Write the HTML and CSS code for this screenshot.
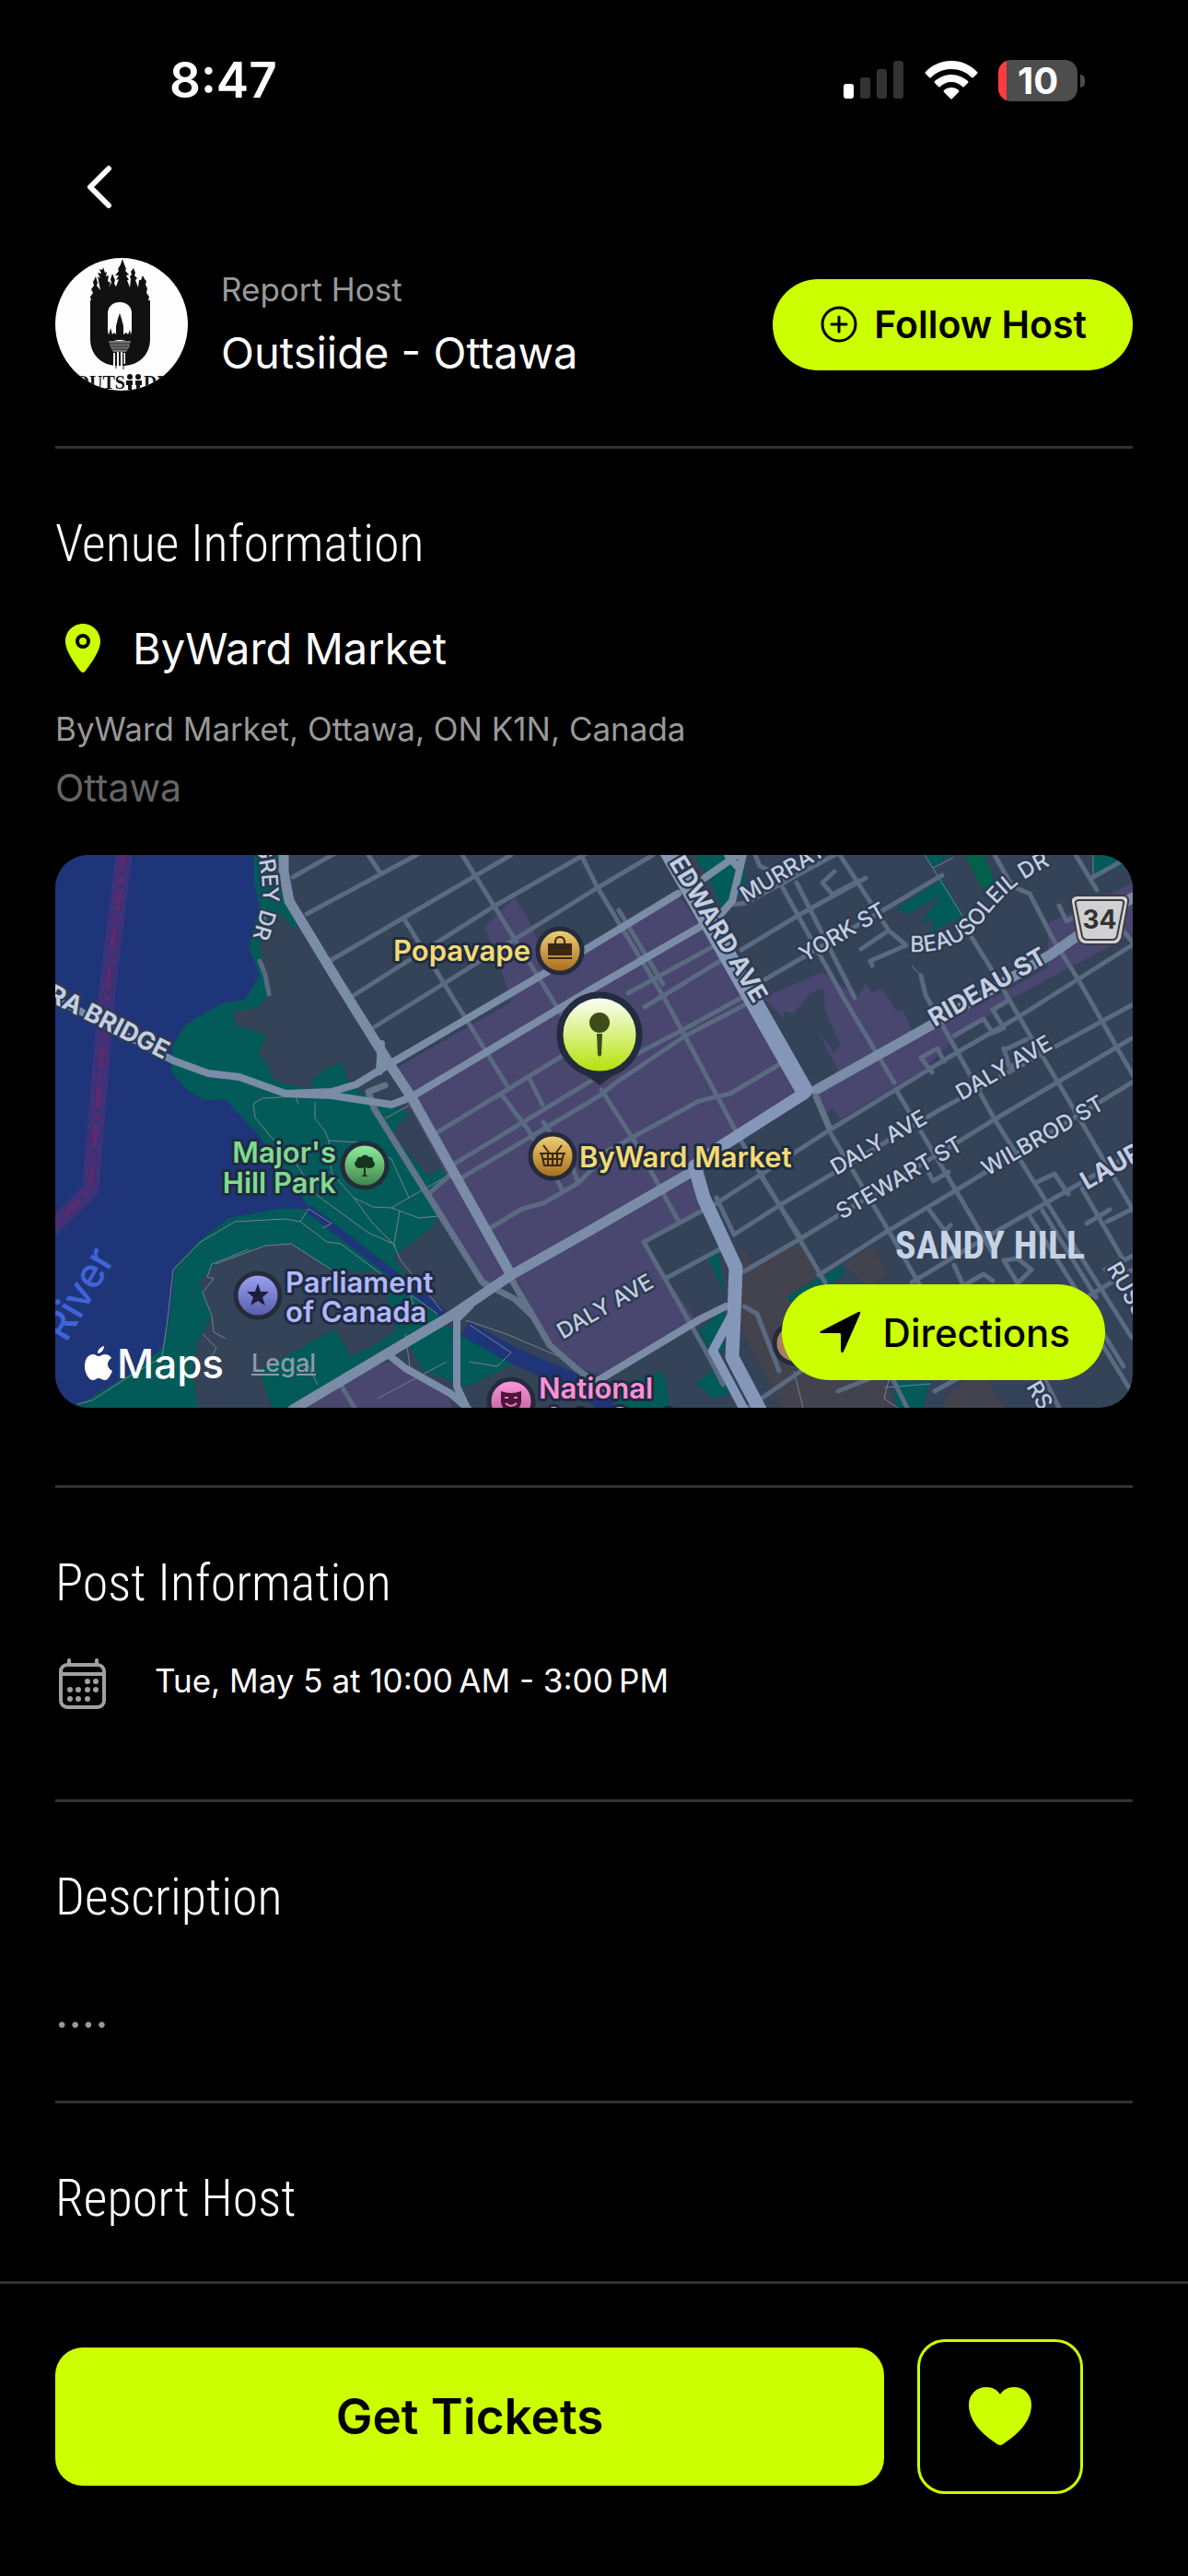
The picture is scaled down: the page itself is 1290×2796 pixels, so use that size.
FILE: index.html
```html
<!DOCTYPE html>
<html lang="en">
<head>
    <meta charset="UTF-8">
    <meta name="viewport" content="width=device-width, initial-scale=1.0">
    <title>Outsiide - Ottawa</title>
    <link rel="stylesheet" href="styles.css">
</head>
<body>
    <div class="statusbar">
        <span class="time">8:47</span>
        <div class="indicators">
            <svg class="signal" width="66" height="42" viewBox="0 0 66 42">
                <rect x="0" y="25" width="11" height="16" rx="3" fill="#fff"/>
                <rect x="18" y="18" width="11" height="23" rx="3" fill="#333"/>
                <rect x="36" y="9" width="11" height="32" rx="3" fill="#333"/>
                <rect x="54" y="0" width="11" height="41" rx="3" fill="#333"/>
            </svg>
            <svg class="wifi" width="58" height="42" viewBox="0 0 58 42" fill="#fff">
                <path d="M29 0C40 0 50 4.500 57 12Q58 13 57 14L53 18Q52 19 51 18C45 12 37 9 29 9S13 12 7 18Q6 19 5 18L1 14Q0 13 1 12C8 4.500 18 0 29 0Z"/>
                <path d="M29 15C36 15 42 18 47 22Q48 23 47 24L43 28Q42 29 41 28C38 25 34 23 29 23S20 25 17 28Q16 29 15 28L11 24Q10 23 11 22C16 18 22 15 29 15Z"/>
                <path d="M29 29C32 29 35 30 37 32Q38 33 37 34L30 41Q29 42 28 41L21 34Q20 33 21 32C23 30 26 29 29 29Z"/>
            </svg>
            <div class="battery">10</div>
        </div>
    </div>

    <div class="topbar">
        <button class="back" aria-label="Back">
            <svg width="48" height="48" viewBox="0 0 48 48"><path d="M34 4L14 24L34 44" fill="none" stroke="#fff" stroke-width="6" stroke-linecap="round" stroke-linejoin="round"/></svg>
        </button>
    </div>

    <main class="content">
        <div class="host">
            <svg class="avatar" viewBox="0 0 144 144">
                <rect width="144" height="144" fill="#fdfdfd"/>
                <!-- trees -->
                <path fill="#111" d="M38 55L39 46L38 42L41 38L39 34L42 30L41 26L44 20L46 27L45 30L49 35L46 20L49 22L46 16L50 17L48 12L51 13L52 10L54 16L56 15L55 20L58 19L57 25L60 27L58 32L61 27L60 23L62 17L65 24L64 28L66 31L69 23L66 24L69 19L65 19L69 14L68 12L71 7L73 1L75 7L77 12L76 14L80 18L77 19L80 24L78 24L81 32L82 23L81 20L83 18L82 15L85 11L87 16L86 19L89 22L87 24L90 32L91 24L93 24L95 19L97 23L99 25L98 29L100 33L99 38L102 42L101 46L103 53L103 70L38 70Z"/>
                <rect x="38" y="42" width="65" height="75" rx="28" fill="#111"/>
                <rect x="38" y="46" width="65" height="30" fill="#111"/>
                <rect x="57" y="48" width="26" height="42" rx="12" fill="#fdfdfd"/>
                <!-- parliament skyline -->
                <path fill="#111" d="M58 89V84L60 76L62 83L64 81L66 83V74L68 66L70 60L72 66L74 74V83L77 81L79 83L81 78L82 84V89Z"/>
                <path fill="#777" d="M58 90H82L80 97L77 102H63L60 97Z"/>
                <path stroke="#222" stroke-width="1" d="M59 93H81M60 96H79M62 99H78"/>
                <path stroke="#fff" stroke-width="2" d="M64 103V117M68 102V122M72 102V119M75 103V115"/>
                <path stroke="#222" stroke-width="1" d="M66 104V120M70 104V116M74 104V121"/>
                <text class="avatar-text end" x="76" y="142">OUTS</text>
                <g fill="#111">
                    <circle cx="81" cy="129" r="3"/><path d="M77 133H84V138H83V143H79V138H77Z"/>
                    <circle cx="90" cy="129" r="3"/><path d="M87 133H94V138H92V143H88V138H87Z"/>
                </g>
                <text class="avatar-text" x="96" y="142">DE</text>
            </svg>
            <div class="host-info">
                <span class="host-label">Report Host</span>
                <span class="host-name">Outsiide - Ottawa</span>
            </div>
            <button class="follow">
                <svg width="40" height="40" viewBox="0 0 40 40" fill="none" stroke="#000" stroke-width="3" stroke-linecap="round"><circle cx="20" cy="20" r="18"/><path d="M20 12V28M12 20H28"/></svg>
                Follow Host
            </button>
        </div>

        <section class="section">
            <h2>Venue Information</h2>
            <div class="venue">
                <svg width="60" height="60" viewBox="0 0 60 60">
                    <path fill="#cf0" d="M30 3C19 3 11 12 11 22C11 33 22 47 27 54Q30 58 33 54C38 47 49 33 49 22C49 12 41 3 30 3Z"/>
                    <circle cx="30" cy="22" r="6" fill="#cf0" stroke="#000" stroke-width="4"/>
                </svg>
                <span>ByWard Market</span>
            </div>
            <p class="address">ByWard Market, Ottawa, ON K1N, Canada</p>
            <p class="city">Ottawa</p>

            <div class="map">
                <svg class="map-canvas" viewBox="0 0 1170 600" preserveAspectRatio="xMidYMid slice">
                    <defs>
                        <linearGradient id="gold" x1="0" y1="0" x2="0" y2="1"><stop offset="0" stop-color="#f0d377"/><stop offset="1" stop-color="#a8691b"/></linearGradient>
                        <linearGradient id="green" x1="0" y1="0" x2="0" y2="1"><stop offset="0" stop-color="#93f3a0"/><stop offset="1" stop-color="#3b7f46"/></linearGradient>
                        <linearGradient id="violet" x1="0" y1="0" x2="0" y2="1"><stop offset="0" stop-color="#9ea2f5"/><stop offset="1" stop-color="#555ba6"/></linearGradient>
                        <linearGradient id="pink" x1="0" y1="0" x2="0" y2="1"><stop offset="0" stop-color="#ff9ae0"/><stop offset="1" stop-color="#b5508f"/></linearGradient>
                        <linearGradient id="lime" x1="0" y1="0" x2="0" y2="1"><stop offset="0" stop-color="#fff"/><stop offset="1" stop-color="#b2e000"/></linearGradient>
                        <path id="grey-dr" d="M218 -12L224 22L226 50L211 102"/>
                        <path id="beausoleil" d="M928 105C970 108 996 88 1012 66C1034 38 1056 16 1130 -8"/>
                    </defs>
                    <rect width="1170" height="600" fill="#344358"/>

                    <!-- water -->
                    <path fill="#1f3579" d="M0 0H216V30L222 56L210 99L222 131L206 157L181 161L143 183L127 207L126 235L143 255L162 266L185 265L220 303L280 384L248 384L189 394L155 420L130 448L124 504L116 536L78 565L21 600H0Z"/>
                    <path class="boundary-band" d="M75 -5L57 143L38 364L-5 406"/>
                    <path class="boundary" d="M75 -5L57 143L38 364L-5 406"/>

                    <!-- parks -->
                    <g fill="#025b58">
                        <path d="M216 0H246L252 40L266 74L258 80L248 66H235L227 86L222 98L232 151L220 166L192 170L197 185L229 195L221 217L230 227L237 245L279 255L278 245L298 230L311 226L319 247L340 263L384 279L370 297L367 305L405 348L419 340L424 348L405 368L415 392L409 404L396 414L367 436L380 456L425 502L410 504L277 384L220 303L185 265L162 266L143 255L126 235L127 207L143 183L181 161L206 157L222 131L210 99L222 56L216 30Z"/>
                        <path d="M248 383L275 386L330 430L400 480L420 500L350 540L258 600H235L221 560L304 514L321 544L350 530L370 515L352 452L300 452L256 422L220 426L174 444L157 464L170 500L155 528L149 557L155 600H21L78 565L116 536L124 504L130 448L155 420L189 394Z"/>
                        <path d="M382 528L400 514L428 512L460 528L515 555L495 553L449 577L400 560Z"/>
                        <path d="M737 175L750 163L779 213L764 223ZM683 191L745 155L748 159L685 195ZM695 2L705 0H748L750 34L725 62L714 34ZM913 58L963 26L986 66L947 86L956 70L940 74L962 44L925 64ZM944 0H970L953 14ZM1127 0H1170V8L1127 24ZM706 432L720 426L727 476ZM792 480L856 444V456L810 490ZM699 516L727 492V538L714 545ZM695 573L722 553L740 582L715 590ZM909 571H950L942 600H914ZM600 580L660 560L668 600H610Z"/>
                        <path fill="#00604a" d="M988 0H1009L1024 40L1005 34Z"/>
                    </g>
                    <!-- inner land of Parliament Hill -->
                    <path fill="#344358" d="M256 422L300 452L352 456L370 515L346 532L321 544L304 514L221 560L235 600H155L149 557L155 528L170 500L157 464L174 444L220 426Z"/>

                    <!-- shopping districts -->
                    <g fill="#49466f">
                        <path d="M371 231L495 160L484 123L466 78L499 46L518 78L536 126L676 42L699 74L745 155L787 227L808 262L725 315L693 336L704 384L639 420L664 460L695 504L595 565L556 553L537 532L503 464L474 470L464 464L405 368L426 350L388 279L376 262L386 256Z"/>
                        <path d="M273 597L346 555L367 549L430 589V600H268Z"/>
                        <path d="M768 155L833 127L871 155L880 139L886 149L898 145L913 169H921L932 195L1026 151L1078 122V74L1170 30V86L1040 155L978 200L940 235L852 287L844 275L836 281L825 259L850 233Z"/>
                    </g>
                    <path fill="#344358" d="M790 170L802 172L820 150L834 144L836 170L852 205L846 214L827 190L850 233L825 250L805 216Z"/>
                    <path fill="#43434d" d="M745 424L756 444L810 422L829 456L794 480L830 540L900 571L912 600H790L745 516ZM856 444L886 424L903 452L886 470ZM965 590L1005 556L1030 600H965Z"/>

                    <!-- canal -->
                    <path d="M275 384L422 498" fill="none" stroke="#1f3579" stroke-width="9"/>
                    <path d="M445 514L499 544L564 572L603 600" fill="none" stroke="#1f3579" stroke-width="18"/>

                    <g class="path">
                        <path d="M264 270L261 262L225 264L215 270L217 285L235 307L258 330L285 370L340 410L367 422L375 440L420 495M282 268V286L293 300L297 310L330 312L345 320L365 330L384 372L365 383L345 382L324 372L300 345L297 310M384 372L430 346M365 383L395 394L415 392M374 386L368 422M324 372L345 400L370 425M358 286L384 272"/>
                        <path d="M24 596L40 592L80 566L116 545L122 504L128 450L158 420L195 398L250 395L266 398L295 420L310 422L350 452L415 498M266 398L275 384L300 400L290 405M210 428L170 444L165 458L172 460L160 475L170 500L172 518L185 525M160 520L175 535L168 548"/>
                        <path d="M174 444L228 424L256 422L300 450M446 505L490 520L565 552M449 550L480 555L495 540L450 510M350 590L425 550M270 545L285 575M380 520L385 555M385 475L395 510M944 0L985 66M953 14L975 3M930 120L940 131M1127 0V22M802 560L812 600M900 578L951 574M905 570L900 590L915 600"/>
                    </g>

                    <g class="road minor">
                        <path d="M258 24L304 -2M273 64L396 -2M298 115L495 0M323 153L476 56L579 -3M346 187L588 36L649 0M340 0L352 18M378 68L491 251M442 0L551 175M570 -2L588 34L660 153L683 195L745 311L810 420L836 464M222 115L228 130L232 151M228 80L226 60"/>
                        <path d="M415 301L484 259L549 219L600 190M432 336L503 293L620 222L683 189L745 155M442 350L590 262L609 247L683 197L748 163M484 259L514 299L551 364M516 245L529 271M530 290L560 335L568 356M474 404L507 384L530 378L568 356L590 334M580 332L699 267L733 259L787 227M593 255L628 309L676 396M622 150L722 95M640 165L722 115M612 60L660 140"/>
                        <path d="M745 103L806 66L880 25M771 135L909 54L963 22M733 54L750 52L850 -2M789 34L856 155L911 247M805 30L868 155M852 0L905 82L924 98M875 102L905 82M924 98L885 115L887 120M846 18L833 30L844 43L872 28M760 0L765 12L778 18L792 30M913 255L978 364L1020 436"/>
                        <path d="M940 131L945 152L978 211L1020 287L1081 384L1169 524M993 86L1016 123L1058 195L1089 247L1139 332L1172 388M1020 0L1039 34L1058 42L1085 94L1112 137L1154 211L1172 242M1108 0L1131 38M1127 24L1170 0M1090 55L1098 72L1140 48M1150 70L1170 95"/>
                        <path d="M639 420L718 378L840 299L978 215L1047 175L1169 98M737 412L787 380L963 275L1169 163M662 460L725 426M748 452L810 416L1020 287L1169 199M829 456L901 410L978 364L1169 247M930 464L1016 412L1169 324M840 299L905 408L951 488M639 420L662 460L710 545L725 575M718 372L737 412M765 347L810 416"/>
                        <path d="M976 196L1008 178L1018 193L1030 188L1018 168L1035 158M952 236L940 220L958 210L965 224M1030 210L1036 230L1045 226M1030 212L1055 200M948 344L953 354L970 344M948 384L966 408L972 402M1066 355L1085 346L1100 368M1058 392L1120 490L1160 555M1072 386L1130 480M1115 362L1160 440M1142 398L1170 384M1120 400L1145 385M1170 435L1140 450M976 445L985 465M1030 440L1045 465L1060 450L1045 438ZM990 465L1008 455L1018 462"/>
                        <path d="M748 490L762 498L786 560M752 600L810 560L860 530M850 582L905 560L925 600M955 582L1030 540M1110 486L1170 450M1130 520L1170 585M1070 560L1090 600M310 575L325 600M405 368L430 346"/>
                    </g>
                    <path class="road medium" d="M358 250L340 257L346 275L464 464L499 482L518 500M495 460L537 532L564 556L603 585"/>

                    <g class="road major">
                        <path d="M248 -5V18L254 50L308 139L363 227L388 265L495 456" stroke-width="11"/>
                        <path d="M-5 155L24 168L128 223L166 237L200 241L250 259L300 257L327 249L363 227L580 100L676 42M250 259L300 261L365 271L386 263L587 143L700 78M352 235L354 205"/>
                        <path d="M258 602L354 545L430 500L495 456L580 408L691 344M826 255L947 187L1081 108L1170 46" stroke-width="11"/>
                        <path d="M450 490L436 504V577L448 602M365 545L380 557L430 585L449 602M590 570L700 504L728 490M705 25L745 -3M748 -5L735 50L722 65M730 0L740 12"/>
                    </g>
                    <g class="road highway">
                        <path d="M665 -5L813 255" stroke-width="19"/>
                        <path d="M813 259L725 315L693 338" stroke-width="13"/>
                        <path d="M695 340L704 372L739 448L737 500L735 545L765 602" stroke-width="15"/>
                        <path d="M737 495L714 538L748 602" stroke-width="10"/>
                    </g>
                    <path class="road medium" d="M826 262L840 295"/>

                    <!-- street names -->
                    <g class="street">
                        <text><textPath href="#grey-dr">GREY DR</textPath></text>
                        <text><textPath href="#beausoleil">BEAUSOLEIL DR</textPath></text>
                        <text transform="translate(750 52) rotate(-31)">MURRAY ST</text>
                        <text transform="translate(814 117) rotate(-30)">YORK ST</text>
                        <text transform="translate(848 348) rotate(-30)">DALY AVE</text>
                        <text transform="translate(984 267) rotate(-30)">DALY AVE</text>
                        <text transform="translate(551 526) rotate(-30)">DALY AVE</text>
                        <text transform="translate(854 396) rotate(-30)">STEWART ST</text>
                        <text transform="translate(1012 349) rotate(-30)">WILBROD ST</text>
                        <text transform="translate(1141 448) rotate(60)">RUSSELL AVE</text>
                        <text transform="translate(1054 577) rotate(60)">RS</text>
                    </g>
                    <g class="street main">
                        <text transform="translate(-10 157) rotate(27)">RA BRIDGE</text>
                        <text transform="translate(666 8) rotate(59)">EDWARD AVE</text>
                        <text transform="translate(955 187) rotate(-30)">RIDEAU ST</text>
                        <text transform="translate(1120 364) rotate(-30)">LAURIER</text>
                    </g>
                    <text class="river" transform="translate(12 530) rotate(-60)">River</text>
                    <text class="district" x="912" y="438">SANDY HILL</text>

                    <!-- route shield -->
                    <path d="M1109 44H1160Q1166 45 1165 51L1158 90Q1156 97 1149 97H1120Q1112 97 1110 90L1103 51Q1102 45 1109 44Z" fill="#d0d0d2" stroke="#3c3c40" stroke-width="2"/>
                    <path d="M1111 49H1158Q1161 50 1160 53L1153 88Q1152 92 1148 92H1121Q1116 92 1115 88L1108 53Q1107 50 1111 49Z" fill="none" stroke="#3c3c40" stroke-width="2"/>
                    <text class="shield" x="1134" y="80">34</text>

                    <!-- places -->
                    <g class="place gold">
                        <circle cx="548" cy="104" r="24" fill="url(#gold)"/>
                        <text class="end" x="516" y="115">Popavape</text>
                        <circle cx="540" cy="327" r="24" fill="url(#gold)"/>
                        <text x="569" y="339">ByWard Market</text>
                    </g>
                    <path fill="#3a2812" d="M535 96H561V109H535ZM535 111H561V113H535Z"/>
                    <path fill="none" stroke="#3a2812" stroke-width="2" d="M543 96V93Q544 89 548 89T553 93V96"/>
                    <path fill="none" stroke="#3a2812" stroke-width="2" d="M526 324H554M528 324L531 337H549L552 324M529 330H551M535 324V337M540 324V337M545 324V337M530 315L536 323M550 315L544 323"/>
                    <g class="place green">
                        <circle cx="336" cy="337" r="24" fill="url(#green)"/>
                        <text class="end" x="305" y="334">Major's</text>
                        <text class="end" x="305" y="367">Hill Park</text>
                    </g>
                    <path fill="#15351c" d="M327 339Q323 335 327 332Q328 327 332 328Q336 323 341 328Q345 327 345 332Q349 336 345 339Q341 341 337 339V347L340 349H332L335 347V339Q331 341 327 339Z"/>
                    <g class="place violet">
                        <circle cx="220" cy="478" r="24" fill="url(#violet)"/>
                        <text x="250" y="475">Parliament</text>
                        <text x="250" y="507">of Canada</text>
                    </g>
                    <path fill="#1d1d3d" d="M220 465L223 474H232L225 480L228 489L220 484L212 489L215 480L208 474H217Z"/>
                    <g class="place pink">
                        <circle cx="495" cy="593" r="24" fill="url(#pink)"/>
                        <text x="525" y="590">National</text>
                        <text x="530" y="622">Arts Centre</text>
                    </g>
                    <path fill="#4a1638" d="M484 582Q495 586 506 582V594Q504 604 495 605Q486 604 484 594Z"/>
                    <path fill="none" stroke="#f07cc6" stroke-width="2" d="M488 589H492M498 589H502M489 595Q495 601 501 595"/>
                    <circle cx="803" cy="530" r="22" fill="#a8825f" stroke="#252b3b" stroke-width="5"/>

                    <!-- venue marker -->
                    <path d="M572 236L591 250L610 236Z" fill="#232b3e"/>
                    <circle class="marker" cx="591" cy="195" r="43" fill="url(#lime)"/>
                    <circle cx="591" cy="182" r="11" fill="#3f4c1b"/>
                    <path d="M588 194H594L593 217Q591 220 589 217Z" fill="#3f4c1b"/>
                </svg>
                <div class="attribution">
                    <svg width="30" height="38" viewBox="0 0 30 38" fill="#fff"><path d="M21 0C21 4 18 8 14 8C14 4 17 1 21 0ZM15 11C17 11 19 9 22 9C25 9 27 10 29 13C23 17 24 24 30 27C28 32 25 37 22 37C19 37 18 35 15 35S12 37 9 37C4 37 0 29 0 22C0 14 4 9 9 9C12 9 13 11 15 11Z"/></svg>
                    <span class="maps">Maps</span>
                    <a class="legal" href="#">Legal</a>
                </div>
                <button class="directions">
                    <svg width="46" height="46" viewBox="0 0 46 46"><path d="M2 22L43 1Q46 0 45 3L27 44Q25 47 24 43V25Q24 24 22 24H3Q0 24 2 22Z"/></svg>
                    Directions
                </button>
            </div>
        </section>

        <section class="section post">
            <h2>Post Information</h2>
            <div class="date">
                <svg width="60" height="60" viewBox="0 0 60 60" fill="none" stroke="#a0a0a0" stroke-width="4">
                    <rect x="6" y="9" width="47" height="46" rx="7"/>
                    <path d="M6 19H53M15 4V9M45 4V9" stroke-linecap="round"/>
                    <g fill="#a0a0a0" stroke="none">
                        <circle cx="35" cy="27" r="3"/><circle cx="44" cy="27" r="3"/>
                        <circle cx="16" cy="36" r="3"/><circle cx="25" cy="36" r="3"/><circle cx="35" cy="36" r="3"/><circle cx="44" cy="36" r="3"/>
                        <circle cx="16" cy="46" r="3"/><circle cx="25" cy="46" r="3"/><circle cx="35" cy="46" r="3"/>
                    </g>
                </svg>
                <span>Tue, May 5 at 10:00&#8239;AM - 3:00&#8239;PM</span>
            </div>
        </section>

        <section class="section about">
            <h2>Description</h2>
            <p class="description">....</p>
        </section>

        <section class="section">
            <h2>Report Host</h2>
        </section>
    </main>

    <footer class="actions">
        <button class="tickets">Get Tickets</button>
        <button class="like" aria-label="Like">
            <svg width="72" height="66" viewBox="0 0 72 66"><path fill="#cf0" d="M36 9C39 4 44 1 51 1C62 1 70 9 70 20C70 39 54 53 39 63Q36 65 33 63C18 53 2 39 2 20C2 9 10 1 21 1C28 1 33 4 36 9Z"/></svg>
        </button>
    </footer>
</body>
</html>
```

FILE: styles.css
```css
*{
    box-sizing: border-box;
}
body{
    margin:0;
    min-height:100vh;
    display:flex;
    flex-direction: column;
    background-color: #000;
    color:#fff;
    font-family: Inter, "Liberation Sans", sans-serif;
    font-size:35px;
}
button{
    border:0;
    padding:0;
    background:none;
    font-family: inherit;
    color:#000;
    display:flex;
    align-items: center;
    justify-content: center;
}
h2,p{
    margin:0;
}
svg{
    display:block;
    flex-shrink: 0;
}

/* status bar */
.statusbar{
    height:150px;
    padding:24px 113px 0 184px;
    display:flex;
    align-items: center;
    justify-content: space-between;
}
.time{
    font-size:53px;
    font-weight: 600;
}
.indicators{
    display:flex;
    align-items: center;
    gap:22px;
}
.battery{
    position:relative;
    width:86px;
    height:45px;
    margin-right:7px;
    border-radius: 14px;
    background: linear-gradient(to right, #ff3b3f 9px, #4d4d4d 9px);
    font-size:40px;
    font-weight: 700;
    line-height: 45px;
    text-align: center;
}
.battery::after{
    content:"";
    position:absolute;
    left:89px;
    top:16px;
    width:5px;
    height:14px;
    border-radius: 0 5px 5px 0;
    background-color: #4d4d4d;
}
.topbar{
    height:106px;
    padding-left:60px;
    display:flex;
    align-items: center;
}
.back{
    width:96px;
    height:96px;
}

/* host */
.content{
    flex:1;
    padding:24px 60px 60px;
}
.host{
    display:flex;
    align-items: center;
    margin-bottom:60px;
}
.avatar{
    width:144px;
    height:144px;
    border-radius: 50%;
}
.avatar-text{
    font-family: "Liberation Serif", serif;
    font-size:20px;
    font-weight: 700;
    fill:#111;
}
.avatar-text.end{
    text-anchor: end;
}
.host-info{
    flex:1;
    display:flex;
    flex-direction: column;
    gap:12px;
    margin-left:36px;
    padding-bottom:4px;
}
.host-label{
    color:#999;
    line-height: 54px;
}
.host-name{
    font-size:47px;
    line-height: 60px;
}
.follow{
    height:99px;
    padding:0 50px 0 52px;
    gap:18px;
    border-radius: 50px;
    background-color: #cf0;
    font-size:41px;
    font-weight: 600;
}

/* sections */
.section{
    border-top:3px solid #333;
    padding:73px 0 84px;
}
.section h2{
    font-family: "Roboto Condensed", Roboto, "Open Sans", sans-serif;
    font-size:56px;
    font-weight: 300;
    line-height: 60px;
}
.section:last-child{
    padding-bottom:0;
}
.venue{
    display:flex;
    align-items: center;
    gap:24px;
    margin-top:54px;
    font-size:47px;
    line-height: 60px;
}
.address{
    margin-top:30px;
    color:#999;
    line-height: 54px;
}
.city{
    margin-top:10px;
    color:#666;
    font-size:41px;
    line-height: 54px;
}
.post{
    padding-bottom:95px;
}
.date{
    display:flex;
    gap:48px;
    margin-top:50px;
    line-height: 52px;
}
.about{
    padding-bottom:67px;
}
.description{
    margin-top:64px;
    color:#999;
    font-size:50px;
    line-height: 60px;
}

/* map */
.map{
    position:relative;
    height:600px;
    margin-top:46px;
    border-radius: 36px;
    overflow:hidden;
}
.map-canvas{
    width:100%;
    height:100%;
}
.boundary-band,.boundary{
    fill:none;
    stroke:#3e3178;
    stroke-width:18;
}
.boundary{
    stroke:#5f2a6b;
    stroke-width:5;
    stroke-dasharray: 22 8 5 8;
}
.path{
    fill:none;
    stroke:#75808f;
    stroke-width:1;
}
.road{
    fill:none;
    stroke-linecap: round;
    stroke-linejoin: round;
}
.minor{
    stroke:#5a6a80;
    stroke-width:5;
}
.medium{
    stroke:#62738a;
    stroke-width:7;
}
.major{
    stroke:#7b8ca6;
    stroke-width:8;
}
.highway{
    stroke:#8497b9;
}
.street text{
    font-size:24px;
    font-weight: 500;
    fill:#c3cee0;
    stroke:#2d3b52;
    stroke-width:5;
    stroke-linejoin: round;
    paint-order: stroke;
}
.main text{
    font-size:27px;
    font-weight: 700;
}
.river{
    font-size:44px;
    font-weight: 500;
    fill:#3f64d6;
}
.district{
    font-family: "Roboto Condensed", "Liberation Sans Narrow", Roboto, sans-serif;
    font-size:42px;
    font-weight: 700;
    fill:#c6d3e4;
}
.shield{
    font-size:28px;
    font-weight: 700;
    fill:#333;
    text-anchor: middle;
}
.place circle{
    stroke:#252b3b;
    stroke-width:5;
}
.place text{
    font-size:31px;
    font-weight: 600;
    stroke:#1f2b40;
    stroke-width:6;
    stroke-linejoin: round;
    paint-order: stroke;
}
.place .end{
    text-anchor: end;
}
.gold text{
    fill:#f3da74;
}
.green text{
    fill:#7fdc8c;
}
.violet text{
    fill:#b0b8ff;
}
.pink text{
    fill:#ff8fd8;
}
.marker{
    stroke:#232b3e;
    stroke-width:7;
}
.attribution{
    position:absolute;
    left:32px;
    bottom:20px;
    display:flex;
    align-items: center;
    gap:5px;
    line-height: 56px;
}
.maps{
    font-size:44px;
    font-weight: 500;
}
.legal{
    margin-left:25px;
    color:#8e9aa8;
    font-size:27px;
    font-weight: 500;
}
.directions{
    position:absolute;
    right:30px;
    bottom:30px;
    height:104px;
    padding:0 38px 0 40px;
    gap:24px;
    border-radius: 52px;
    background-color: #cf0;
    font-size:42px;
    font-weight: 500;
}

/* bottom bar */
.actions{
    display:flex;
    align-items: center;
    gap:36px;
    padding:60px 114px 90px 60px;
    border-top:3px solid #333;
}
.tickets{
    flex:1;
    height:150px;
    border-radius: 30px;
    background-color: #cf0;
    font-size:53px;
    font-weight: 600;
}
.like{
    width:180px;
    height:168px;
    border:3px solid #cf0;
    border-radius: 30px;
}
```
